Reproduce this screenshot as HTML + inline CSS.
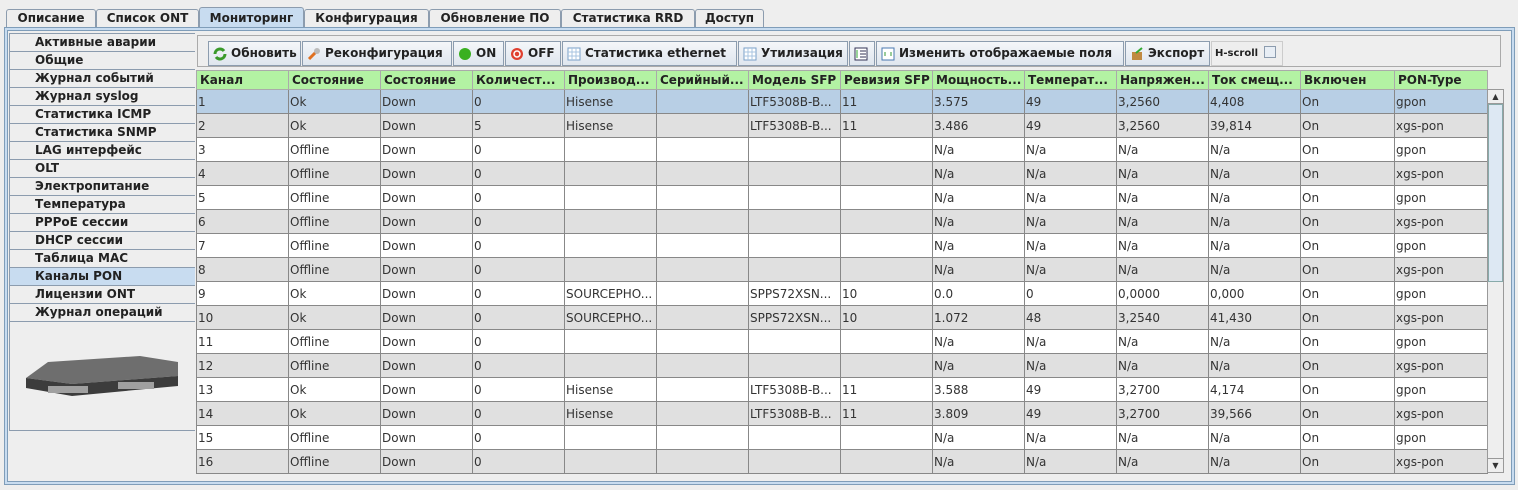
<!DOCTYPE html><html><head><meta charset="utf-8"><style>
*{box-sizing:border-box;margin:0;padding:0}
body{width:1518px;height:490px;background:#eeeeee;font-family:"DejaVu Sans","Liberation Sans",sans-serif;font-size:12px;color:#333;position:relative;overflow:hidden}
.tab{position:absolute;top:9px;height:19px;border:1px solid #8c9cae;border-bottom:none;background:#eeeeee;font-weight:bold;font-size:12px;color:#222;text-align:center;line-height:17px;border-radius:3px 3px 0 0}
.tab.act{background:#c8dcf0;top:7px;height:21px;line-height:20px}
.main{position:absolute;left:4px;top:27px;width:1511px;height:458px;border:1px solid #7f9db9;box-shadow:inset 0 0 0 2px #c8dcf0, inset 0 0 0 3px #7f9db9}
.nav{position:absolute;left:9px;top:33px;width:186px}
.ni{height:18px;border:1px solid #8c9cae;border-right:none;border-bottom:none;padding-left:25px;font-weight:bold;font-size:12px;line-height:17px;color:#222;background:#eeeeee}
.ni.sel{background:#c8dcf0}
.img{position:absolute;left:9px;top:321px;width:186px;height:110px;border:1px solid #8c9cae;border-right:none;background:#eeeeee}
.tb{position:absolute;left:197px;top:35px;width:1304px;height:32px;border:1px solid #aaa}
.btn{position:absolute;top:5px;height:25px;border:1px solid #8c9cae;background:linear-gradient(#f4f6f9,#dfe6ee);font-weight:bold;font-size:12px;line-height:23px;padding-left:22px;color:#222}
.ic{position:absolute;left:4px;top:5px;width:14px;height:14px}
table{position:absolute;left:196px;top:70px;border-collapse:collapse;table-layout:fixed}
td,th{height:24px;border:1px solid #888;padding-left:1px;white-space:nowrap;overflow:hidden;font-size:12px;text-align:left;font-weight:normal;font-family:"DejaVu Sans",sans-serif;color:#333}
th{height:19px;background:#b3f2a3;font-weight:bold;color:#222;border-color:#aaa;padding-left:3px}
tr.g td{background:#e0e0e0}
tr.s td{background:#b8cfe5}
tr.w td{background:#fff}
.sb{position:absolute;left:1487px;top:89px;width:17px;height:384px;background:#eee;border:1px solid #999}
</style></head><body>
<div class="tab" style="left:6px;width:90px">Описание</div>
<div class="tab" style="left:96px;width:103px">Список ONT</div>
<div class="tab act" style="left:199px;width:105px">Мониторинг</div>
<div class="tab" style="left:304px;width:125px">Конфигурация</div>
<div class="tab" style="left:429px;width:132px">Обновление ПО</div>
<div class="tab" style="left:561px;width:134px">Статистика RRD</div>
<div class="tab" style="left:695px;width:69px">Доступ</div>
<div class="main"></div>
<div class="nav">
<div class="ni">Активные аварии</div><div class="ni">Общие</div><div class="ni">Журнал событий</div><div class="ni">Журнал syslog</div><div class="ni">Статистика ICMP</div><div class="ni">Статистика SNMP</div><div class="ni">LAG интерфейс</div><div class="ni">OLT</div><div class="ni">Электропитание</div><div class="ni">Температура</div><div class="ni">PPPoE сессии</div><div class="ni">DHCP сессии</div><div class="ni">Таблица MAC</div><div class="ni sel">Каналы PON</div><div class="ni">Лицензии ONT</div><div class="ni">Журнал операций</div>
</div>
<div class="img"><svg width="186" height="110"><polygon points="38,40 130,34 168,40 168,54 62,62 16,56" fill="#6e6e6e"/><polygon points="16,56 62,62 168,54 168,64 62,74 16,66" fill="#3c3c3c"/><g fill="#a0a0a0"><rect x="38" y="64" width="40" height="7"/><rect x="108" y="60" width="36" height="7"/></g></svg></div>
<div class="tb">
<div class="btn" style="left:10px;width:93px"><svg class="ic" viewBox="0 0 14 14"><path d="M2 7a5 5 0 0 1 9-3" stroke="#3a9a2a" stroke-width="3" fill="none"/><path d="M12 7a5 5 0 0 1-9 3" stroke="#3a9a2a" stroke-width="3" fill="none"/></svg>Обновить</div>
<div class="btn" style="left:104px;width:150px"><svg class="ic" viewBox="0 0 14 14"><path d="M2 12L9 5" stroke="#e07020" stroke-width="3"/><circle cx="10" cy="4" r="3" fill="#bbb"/></svg>Реконфигурация</div>
<div class="btn" style="left:255px;width:51px"><svg class="ic" viewBox="0 0 14 14"><circle cx="7" cy="7" r="6" fill="#3ab020"/></svg>ON</div>
<div class="btn" style="left:307px;width:56px"><svg class="ic" viewBox="0 0 14 14"><circle cx="7" cy="7" r="6" fill="#e04030"/><circle cx="7" cy="7" r="3" fill="none" stroke="#fff" stroke-width="1.5"/></svg>OFF</div>
<div class="btn" style="left:364px;width:175px"><svg class="ic" viewBox="0 0 14 14"><rect x="1" y="1" width="12" height="12" fill="#fff" stroke="#7aa0c8"/><path d="M1 5h12M1 9h12M5 1v12M9 1v12" stroke="#a8c4e0"/></svg>Статистика ethernet</div>
<div class="btn" style="left:540px;width:110px"><svg class="ic" viewBox="0 0 14 14"><rect x="1" y="1" width="12" height="12" fill="#fff" stroke="#7aa0c8"/><path d="M1 5h12M1 9h12M5 1v12M9 1v12" stroke="#a8c4e0"/></svg>Утилизация</div>
<div class="btn" style="left:651px;width:26px"><svg class="ic" viewBox="0 0 14 14"><rect x="1" y="1" width="12" height="12" fill="#fff" stroke="#335"/><path d="M6 4h6M6 7h6M6 10h6" stroke="#335"/><path d="M3 3v8" stroke="#3a3"/></svg></div>
<div class="btn" style="left:678px;width:248px"><svg class="ic" viewBox="0 0 14 14"><rect x="1" y="1" width="12" height="12" fill="#fff" stroke="#4a78b0"/><path d="M4 5v4M10 5v4" stroke="#393"/></svg>Изменить отображаемые поля</div>
<div class="btn" style="left:927px;width:85px"><svg class="ic" viewBox="0 0 14 14"><rect x="2" y="5" width="10" height="8" fill="#c08a40"/><path d="M6 6L12 1" stroke="#3a3" stroke-width="2"/></svg>Экспорт</div>
<div style="position:absolute;left:1013px;top:5px;width:72px;height:25px;border:1px solid #ccc;font-size:10px;font-weight:bold;line-height:23px;padding-left:3px;color:#222">H-scroll <span style="display:inline-block;width:12px;height:12px;border:1px solid #8c9cae;background:#e8eef5;vertical-align:-2px;margin-left:2px"></span></div>
</div>
<table>
<colgroup><col style="width:92px"><col style="width:92px"><col style="width:92px"><col style="width:92px"><col style="width:92px"><col style="width:92px"><col style="width:92px"><col style="width:92px"><col style="width:92px"><col style="width:92px"><col style="width:92px"><col style="width:92px"><col style="width:94px"><col style="width:93px"></colgroup>
<tr><th>Канал</th><th>Состояние</th><th>Состояние</th><th>Количест...</th><th>Производ...</th><th>Серийный...</th><th>Модель SFP</th><th>Ревизия SFP</th><th>Мощность...</th><th>Температ...</th><th>Напряжен...</th><th>Ток смещ...</th><th>Включен</th><th>PON-Type</th></tr>
<tr class="s"><td>1</td><td>Ok</td><td>Down</td><td>0</td><td>Hisense</td><td></td><td>LTF5308B-B...</td><td>11</td><td>3.575</td><td>49</td><td>3,2560</td><td>4,408</td><td>On</td><td>gpon</td></tr>
<tr class="g"><td>2</td><td>Ok</td><td>Down</td><td>5</td><td>Hisense</td><td></td><td>LTF5308B-B...</td><td>11</td><td>3.486</td><td>49</td><td>3,2560</td><td>39,814</td><td>On</td><td>xgs-pon</td></tr>
<tr class="w"><td>3</td><td>Offline</td><td>Down</td><td>0</td><td></td><td></td><td></td><td></td><td>N/a</td><td>N/a</td><td>N/a</td><td>N/a</td><td>On</td><td>gpon</td></tr>
<tr class="g"><td>4</td><td>Offline</td><td>Down</td><td>0</td><td></td><td></td><td></td><td></td><td>N/a</td><td>N/a</td><td>N/a</td><td>N/a</td><td>On</td><td>xgs-pon</td></tr>
<tr class="w"><td>5</td><td>Offline</td><td>Down</td><td>0</td><td></td><td></td><td></td><td></td><td>N/a</td><td>N/a</td><td>N/a</td><td>N/a</td><td>On</td><td>gpon</td></tr>
<tr class="g"><td>6</td><td>Offline</td><td>Down</td><td>0</td><td></td><td></td><td></td><td></td><td>N/a</td><td>N/a</td><td>N/a</td><td>N/a</td><td>On</td><td>xgs-pon</td></tr>
<tr class="w"><td>7</td><td>Offline</td><td>Down</td><td>0</td><td></td><td></td><td></td><td></td><td>N/a</td><td>N/a</td><td>N/a</td><td>N/a</td><td>On</td><td>gpon</td></tr>
<tr class="g"><td>8</td><td>Offline</td><td>Down</td><td>0</td><td></td><td></td><td></td><td></td><td>N/a</td><td>N/a</td><td>N/a</td><td>N/a</td><td>On</td><td>xgs-pon</td></tr>
<tr class="w"><td>9</td><td>Ok</td><td>Down</td><td>0</td><td>SOURCEPHO...</td><td></td><td>SPPS72XSN...</td><td>10</td><td>0.0</td><td>0</td><td>0,0000</td><td>0,000</td><td>On</td><td>gpon</td></tr>
<tr class="g"><td>10</td><td>Ok</td><td>Down</td><td>0</td><td>SOURCEPHO...</td><td></td><td>SPPS72XSN...</td><td>10</td><td>1.072</td><td>48</td><td>3,2540</td><td>41,430</td><td>On</td><td>xgs-pon</td></tr>
<tr class="w"><td>11</td><td>Offline</td><td>Down</td><td>0</td><td></td><td></td><td></td><td></td><td>N/a</td><td>N/a</td><td>N/a</td><td>N/a</td><td>On</td><td>gpon</td></tr>
<tr class="g"><td>12</td><td>Offline</td><td>Down</td><td>0</td><td></td><td></td><td></td><td></td><td>N/a</td><td>N/a</td><td>N/a</td><td>N/a</td><td>On</td><td>xgs-pon</td></tr>
<tr class="w"><td>13</td><td>Ok</td><td>Down</td><td>0</td><td>Hisense</td><td></td><td>LTF5308B-B...</td><td>11</td><td>3.588</td><td>49</td><td>3,2700</td><td>4,174</td><td>On</td><td>gpon</td></tr>
<tr class="g"><td>14</td><td>Ok</td><td>Down</td><td>0</td><td>Hisense</td><td></td><td>LTF5308B-B...</td><td>11</td><td>3.809</td><td>49</td><td>3,2700</td><td>39,566</td><td>On</td><td>xgs-pon</td></tr>
<tr class="w"><td>15</td><td>Offline</td><td>Down</td><td>0</td><td></td><td></td><td></td><td></td><td>N/a</td><td>N/a</td><td>N/a</td><td>N/a</td><td>On</td><td>gpon</td></tr>
<tr class="g"><td>16</td><td>Offline</td><td>Down</td><td>0</td><td></td><td></td><td></td><td></td><td>N/a</td><td>N/a</td><td>N/a</td><td>N/a</td><td>On</td><td>xgs-pon</td></tr>
</table>
<div style="position:absolute;left:196px;top:473px;width:1291px;height:6px;background:#eee;border-top:1px solid #888"></div>
<div class="sb"><div style="height:14px;border-bottom:1px solid #999;text-align:center;font-size:8px;line-height:14px">▲</div><div style="position:absolute;top:14px;left:0;width:15px;height:178px;background:#dde8f3;border:1px solid #8aa"></div><div style="position:absolute;bottom:0;width:15px;height:14px;border-top:1px solid #999;text-align:center;font-size:8px;line-height:14px">▼</div></div>
</body></html>
